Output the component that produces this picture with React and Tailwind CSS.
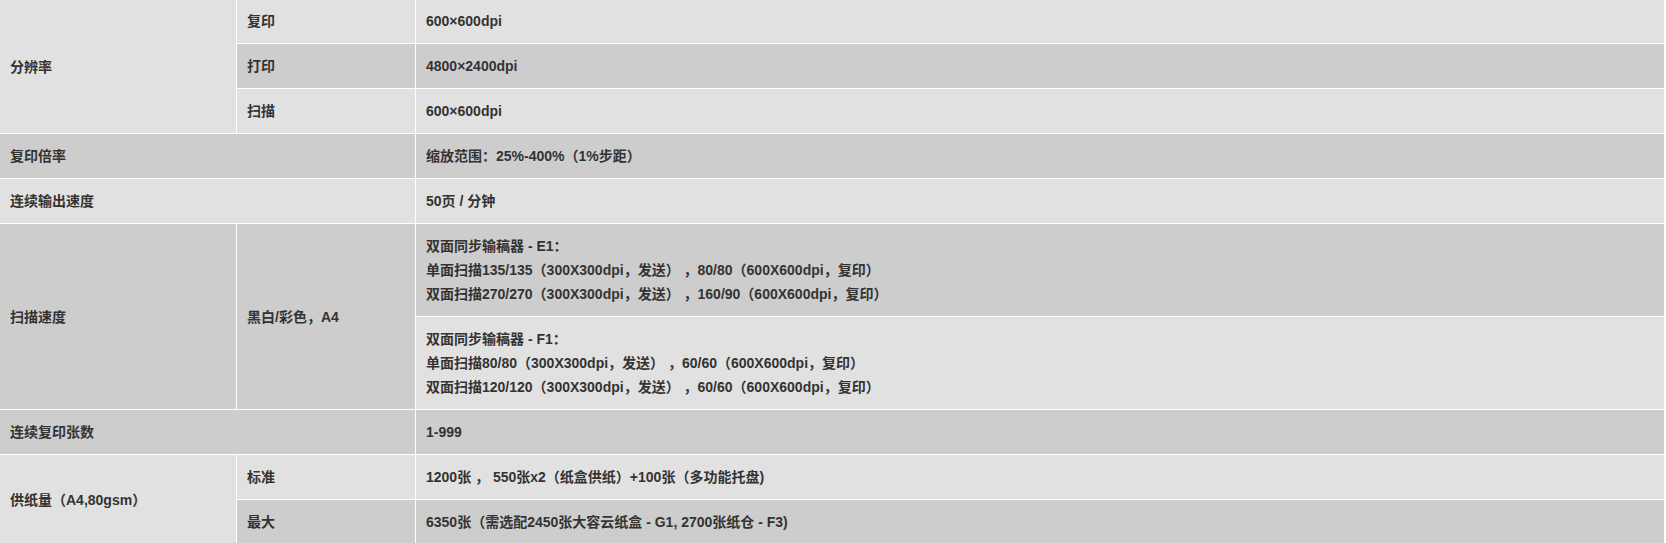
import React from "react";

const LIGHT = "bg-[#e1e1e1]";
const DARK = "bg-[#cdcdcd]";

const cell = "border-b border-r border-white px-[10px] py-[10px] align-middle";

export default function App() {
  return (
    <div className="w-[1666px] bg-white">
      <table
        className="w-[1665px] table-fixed border-separate border-spacing-0 text-[14px] font-bold leading-[24px] text-[#333333]"
        style={{ fontFamily: '"Liberation Sans", Arial, "Noto Sans CJK SC", sans-serif' }}
      >
        <tbody>
          <tr className={LIGHT}>
            <td rowSpan={3} className={`${cell} w-[237px]`}>分辨率</td>
            <td className={`${cell} w-[179px] pt-[9px]`}>复印</td>
            <td className={`${cell} pt-[9px]`}>600×600dpi</td>
          </tr>
          <tr className={DARK}>
            <td className={cell}>打印</td>
            <td className={cell}>4800×2400dpi</td>
          </tr>
          <tr className={LIGHT}>
            <td className={cell}>扫描</td>
            <td className={cell}>600×600dpi</td>
          </tr>
          <tr className={DARK}>
            <td colSpan={2} className={cell}>复印倍率</td>
            <td className={cell}>缩放范围：25%-400%（1%步距）</td>
          </tr>
          <tr className={LIGHT}>
            <td colSpan={2} className={cell}>连续输出速度</td>
            <td className={cell}>50页 / 分钟</td>
          </tr>
          <tr className={DARK}>
            <td rowSpan={2} className={cell}>扫描速度</td>
            <td rowSpan={2} className={cell}>黑白/彩色，A4</td>
            <td className={cell}>
              双面同步输稿器 - E1：
              <br />
              单面扫描135/135（300X300dpi，发送） ，80/80（600X600dpi，复印）
              <br />
              双面扫描270/270（300X300dpi，发送） ，160/90（600X600dpi，复印）
            </td>
          </tr>
          <tr className={LIGHT}>
            <td className={cell}>
              双面同步输稿器 - F1：
              <br />
              单面扫描80/80（300X300dpi，发送） ，60/60（600X600dpi，复印）
              <br />
              双面扫描120/120（300X300dpi，发送） ，60/60（600X600dpi，复印）
            </td>
          </tr>
          <tr className={DARK}>
            <td colSpan={2} className={cell}>连续复印张数</td>
            <td className={cell}>1-999</td>
          </tr>
          <tr className={LIGHT}>
            <td rowSpan={2} className={cell}>供纸量（A4,80gsm）</td>
            <td className={cell}>标准</td>
            <td className={cell}>1200张 ， 550张x2（纸盒供纸）+100张（多功能托盘)</td>
          </tr>
          <tr className={DARK}>
            <td className={cell}>最大</td>
            <td className={cell}>6350张（需选配2450张大容云纸盒 - G1, 2700张纸仓 - F3)</td>
          </tr>
        </tbody>
      </table>
    </div>
  );
}
